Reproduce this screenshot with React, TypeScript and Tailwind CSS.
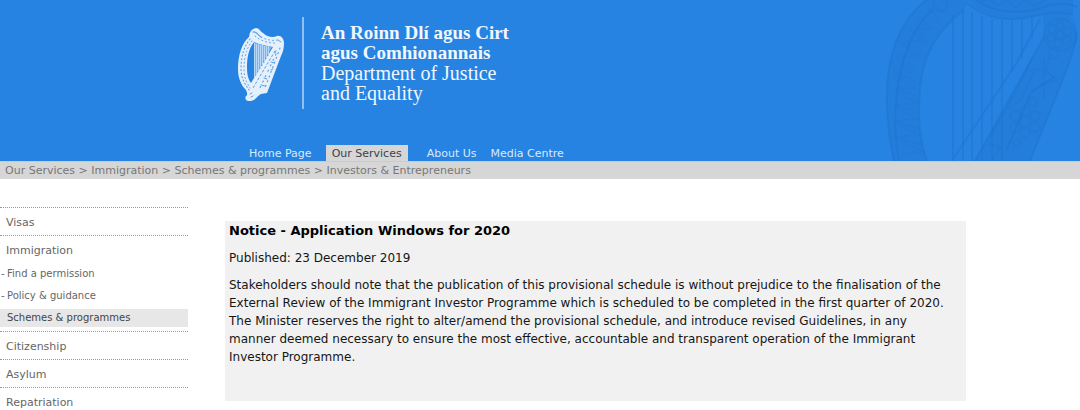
import { clsx } from "clsx";

const TABS = [
  { label: "Home Page", active: false },
  { label: "Our Services", active: true },
  { label: "About Us", active: false },
  { label: "Media Centre", active: false },
];

const CRUMBS = [
  "Our Services",
  "Immigration",
  "Schemes & programmes",
  "Investors & Entrepreneurs",
];

type MenuItem = {
  label: string;
  children?: { label: string; active?: boolean }[];
};

const MENU: MenuItem[] = [
  { label: "Visas" },
  {
    label: "Immigration",
    children: [
      { label: "Find a permission" },
      { label: "Policy & guidance" },
      { label: "Schemes & programmes", active: true },
    ],
  },
  { label: "Citizenship" },
  { label: "Asylum" },
  { label: "Repatriation" },
];

function HarpLogo() {
  return (
    <svg viewBox="0 0 46 73" className="h-[73px] w-[46px]" aria-hidden="true">
      <path
        fillRule="evenodd"
        fill="#e4f1fd"
        d="M18 0C21 0 22 3 25 5C29 9 35 10 39 8C43 7 46 11 46 15C46 20 45 24 43 28L29 65L23 66C20 67 18 72 13 73C9 74 6 71 8 68C10 67 9 64 8 62C3 57 0 50 0 41C0 27 4 15 11 9C12 6 11 2 18 0ZM16 14C11 20 9 29 9 39C9 46 10 51 13 55L35 19C29 18 23 17 16 14Z"
      />
      <path fill="#7db4f0" d="M16 14C22 17 28 18 34 19L16 50Z" />
      <path
        stroke="#b9d8f8"
        strokeWidth="1"
        d="M16.500 15V50M18.500 16V47M20.500 16V44M22.500 17V41M24.500 17V38M26.500 18V35M28.500 18V31M30.500 18V28"
      />
      <g fill="none" stroke="#5c9fe6" strokeLinecap="round">
        <path strokeWidth="1.100" strokeDasharray="1 2.600" d="M12 11C5 20 3 30 3 41C3 50 7 56 11 62" />
        <path strokeWidth="1" strokeDasharray="1 2.800" d="M14 13C8 21 6 31 6 41C6 50 9 55 12 60" />
        <path strokeWidth="1.300" d="M15 4C18 3 20 7 23 9" />
        <path strokeWidth="1" strokeDasharray="1 3" d="M23 9C29 12 34 13 40 12M17 8C23 13 30 15 37 15" />
        <path strokeWidth="1" strokeDasharray="2 2.500" d="M37 23L15 60" />
        <path strokeWidth="1.200" strokeDasharray="1 4" d="M42 20L27 60" />
        <path strokeWidth="1.200" strokeDasharray="1 5" d="M38 26L21 62" />
        <path strokeWidth="1" d="M40 12L43 14M37 25L38 23M33 34L36 35M33 42L35 41M26 50L29 51M27 58L23 57M12 66L14 65M13 69L15 68" />
      </g>
    </svg>
  );
}

// Oversized emblem that sits faintly behind the right end of the banner
function HarpWatermark() {
  return (
    <svg
      viewBox="0 0 210 162"
      className="absolute right-0 bottom-0 h-[162px] w-[210px]"
      fill="none"
      stroke="#1f74ce"
      aria-hidden="true"
    >
      <g fill="#217bd7" stroke="none" opacity="0.55">
        <path d="M57 0C27 24 16 62 17 104C18 128 20 145 24 162H57C50 144 48 127 49 104C50 64 61 36 94 11L99 0Z" />
        <path d="M97 0C110 14 125 20 145 20C168 19 180 9 203 16V0Z" />
        <path d="M173 16C183 8 208 13 207 34C205 55 188 91 160 162H105L174 38Z" />
      </g>
      <g strokeWidth="2" opacity="0.5">
        <path d="M57 0C27 24 16 62 17 104C18 128 20 145 24 162M94 11C61 36 50 64 49 104C48 127 50 144 57 162M29 162C20 112 27 43 63 10" />
        <path d="M97 4C111 15 125 21 145 20C168 19 180 9 203 16M105 0C121 13 148 16 171 9C183 4 197 3 207 8" />
        <path d="M170 20L146 65L83 160M174 38L105 162M207 34C205 55 188 91 160 162M184 78L161 93L137 150" />
      </g>
      <path
        strokeWidth="2"
        opacity="0.5"
        d="M83 16V162M93 10V162M102 13V162M112 17V162M122 20V162M132 21V162M142 21V72M152 20V60M162 18V40M132 108V162"
      />
      <path
        strokeWidth="2"
        opacity="0.25"
        d="M58 9L70 22M48 17L62 29L48 31L57 43M38 29L54 43L36 42L50 56M31 43L48 59L30 56L45 69M27 58L44 73L26 73L45 83M25 75L45 89L26 89L47 98M24 91L47 104L25 106L48 114M25 108L48 120L25 122L49 130M26 124L49 136L27 138L52 146M29 140L53 153L31 155M64 5L74 14"
      />
      <g strokeWidth="2" opacity="0.35">
        <circle cx="190" cy="36" r="16" />
        <circle cx="190" cy="36" r="4" />
        <circle cx="190" cy="27" r="4" />
        <circle cx="198" cy="32" r="4" />
        <circle cx="197" cy="41" r="4" />
        <circle cx="188" cy="45" r="4" />
        <circle cx="181" cy="39" r="4" />
        <circle cx="182" cy="30" r="4" />
        <circle cx="183" cy="55" r="5" />
        <circle cx="155" cy="123" r="5" />
        <circle cx="155" cy="112" r="5" />
        <circle cx="165" cy="117" r="5" />
        <circle cx="165" cy="128" r="5" />
        <circle cx="155" cy="134" r="5" />
        <circle cx="145" cy="128" r="5" />
        <circle cx="145" cy="117" r="5" />
        <circle cx="163" cy="103" r="4" />
        <circle cx="147" cy="144" r="4" />
        <circle cx="70" cy="5" r="7" />
        <path d="M156 72L174 70L187 81L169 87M174 59V100M166 69L151 101L137 111M181 55L174 78M162 59L146 93L120 139M119 145L131 148L122 162M110 3L120 0L127 7L137 1L145 9L155 1L165 7L176 0" />
      </g>
    </svg>
  );
}

function Banner() {
  return (
    <header className="relative flex flex-col bg-[#2683e2] text-[#f0f7fe]">
      <HarpWatermark />
      <div className="relative flex h-[145px] items-start pt-[17px] pl-[238px]">
        <div className="pt-[11px]">
          <HarpLogo />
        </div>
        <div className="ml-[18px] h-[92px] w-0.5 bg-[#8fc0f1]" />
        <div className="ml-[17px] pt-1.5 font-['Liberation_Serif',serif]">
          <p className="text-[19px] leading-5 font-bold">
            An Roinn Dlí agus Cirt
            <br />
            agus Comhionannais
          </p>
          <p className="text-[20px] leading-5">
            Department of Justice
            <br />
            and Equality
          </p>
        </div>
      </div>
      <nav className="relative flex pl-[242px] text-[11px] leading-[14px]" aria-label="Main">
        {TABS.map((tab) => (
          <a
            key={tab.label}
            href="#"
            className={clsx(
              "pt-0.5",
              tab.active
                ? "mr-3 ml-[7px] bg-[#d6d6d6] px-1.5 text-[#3a424b]"
                : "px-[7px] text-[#d9eafc]",
            )}
          >
            {tab.label}
          </a>
        ))}
      </nav>
    </header>
  );
}

function Breadcrumb() {
  return (
    <nav
      className="border-t border-[#b9cfe6] bg-[#d6d6d6] pl-[5px] text-[11px] leading-[17px] text-[#777]"
      aria-label="Breadcrumb"
    >
      {CRUMBS.map((crumb, i) => (
        <span key={crumb}>
          {i > 0 && " > "}
          <a href="#">{crumb}</a>
        </span>
      ))}
    </nav>
  );
}

function SideMenu() {
  return (
    <nav className="w-[188px] shrink-0 pt-7 text-[11px] leading-4 text-[#666]" aria-label="Section">
      <ul>
        {MENU.map((item) => (
          <li key={item.label} className="border-t border-dotted border-[#999]">
            <a
              href="#"
              className={clsx("block pt-[7px] pl-1.5", item.children ? "pb-0.5" : "pb-1")}
            >
              {item.label}
            </a>
            {item.children && (
              <ul className="pb-1 text-[10px] leading-[18px]">
                {item.children.map((child) => (
                  <li key={child.label} className="mt-1">
                    <a
                      href="#"
                      className={clsx("flex", child.active && "bg-[#e7e7e7] text-[#444]")}
                    >
                      <span className="w-[7px] shrink-0 pl-px">{!child.active && "-"}</span>
                      {child.label}
                    </a>
                  </li>
                ))}
              </ul>
            )}
          </li>
        ))}
      </ul>
    </nav>
  );
}

function Notice() {
  return (
    <article className="mt-[42px] mr-[114px] ml-[37px] min-h-[180px] flex-1 self-start bg-[#f1f1f1] pt-px pr-3 pl-1 text-[12px] leading-[18px] text-[#161616]">
      <h1 className="text-[13px] font-bold text-black">Notice - Application Windows for 2020</h1>
      <p className="mt-[9px]">Published: 23 December 2019</p>
      <p className="mt-[9px]">
        Stakeholders should note that the publication of this provisional schedule is without
        prejudice to the finalisation of the External Review of the Immigrant Investor Programme
        which is scheduled to be completed in the first quarter of 2020. The Minister reserves the
        right to alter/amend the provisional schedule, and introduce revised Guidelines, in any
        manner deemed necessary to ensure the most effective, accountable and transparent operation
        of the Immigrant Investor Programme.
      </p>
    </article>
  );
}

export default function App() {
  return (
    <div className="bg-white font-['DejaVu_Sans',Verdana,sans-serif]">
      <Banner />
      <Breadcrumb />
      <main className="flex">
        <SideMenu />
        <Notice />
      </main>
    </div>
  );
}
